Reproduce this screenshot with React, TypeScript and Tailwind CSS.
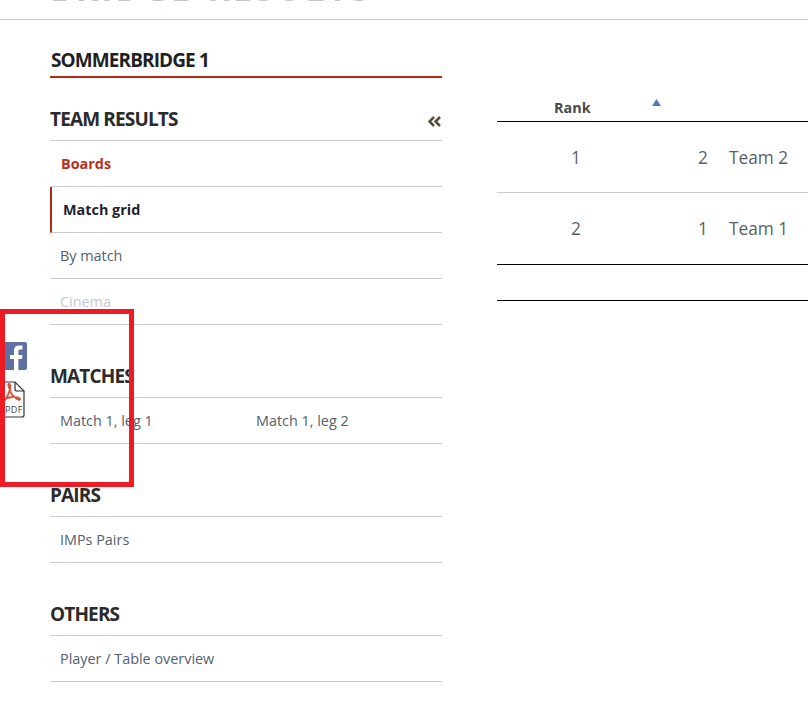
import React from 'react';

const FONT = "font-['Open_Sans',sans-serif]";

const SectionTitle: React.FC<{ title: string; collapse?: boolean }> = ({ title, collapse }) => (
  <div className="h-[35px] border-b border-[#cccccc] flex items-start justify-between">
    <h3 className="text-[19px] leading-[26px] font-bold tracking-[-0.85px] text-[#2b2b2b]">{title}</h3>
    {collapse && (
      <svg className="mt-[10px] mr-px" width="13" height="11" viewBox="0 0 13 11" fill="none" stroke="#5e4a36" strokeWidth="2.5">
        <path d="M6 1 L1.5 5.5 L6 10" />
        <path d="M12 1 L7.5 5.5 L12 10" />
      </svg>
    )}
  </div>
);

const MenuRow: React.FC<{ children: React.ReactNode; className?: string }> = ({
  children,
  className = 'pl-[10px] text-[#55606e]',
}) => <div className={`h-[46px] border-b border-[#cccccc] flex items-center text-[14.4px] ${className}`}>{children}</div>;

const FacebookIcon = () => (
  <svg width="27" height="28" viewBox="0 0 27 28" className="block">
    <rect x="-6" width="33" height="28" rx="2" fill="#5d6fa3" />
    <path d="M14 28 V17 H10 V13 H14 V9 C14 5 16 3.5 19 3.5 H22.5 V7.5 H20 C18.6 7.5 18.4 8.2 18.4 9.2 V13 H22.5 L22 17 H18.4 V28 Z" fill="#fff" />
  </svg>
);

const PdfIcon = () => (
  <svg width="25" height="37" viewBox="0 0 25 37" className="block">
    <path d="M-4 1 H15 L24 10 V34 Q24 36 22 36 H-4 Z" fill="#fff" stroke="#333" strokeWidth="1.2" />
    <path d="M15 1 V8 Q15 10 17 10 H24" fill="none" stroke="#333" strokeWidth="1.2" />
    <path
      d="M9 3 C12 3 10 10 7 16 C5 20 1 23 0 22 C-1 20 6 17 12 16 C16 15.5 21 17 20 18.5 C19 20 13 16 11 12 C10 9 7 3 9 3 Z"
      fill="none"
      stroke="#d0583f"
      strokeWidth="1.8"
    />
  </svg>
);

export default function App() {
  return (
    <div className={`relative w-[808px] h-[707px] overflow-hidden bg-white ${FONT}`}>
      {/* Cropped page heading */}
      <div className="h-5 border-b border-[#cccccc] overflow-hidden">
        <div className="pl-[50px] -mt-[26px] text-[34px] leading-[28px] tracking-[3px] font-bold text-[#c4c4c4] whitespace-nowrap">BRIDGE-RESULTS</div>
      </div>

      <div className="flex pl-[50px] pt-[25px]">
        {/* Left menu */}
        <div className="w-[392px] shrink-0">
          <div className="h-[33px] border-b-2 border-[#b52a13] text-[19px] leading-[30px] font-bold tracking-[-0.9px] text-[#1f1f1f] pl-px">
            SOMMERBRIDGE 1
          </div>

          <div className="mt-[28px]">
            <SectionTitle title="TEAM RESULTS" collapse />
            <MenuRow className="pl-[11px] font-bold text-[#b8301c]">Boards</MenuRow>
            <MenuRow className="pl-[11px] font-bold text-[#1f2430] border-l-2 border-l-[#b52a13]">Match grid</MenuRow>
            <MenuRow>By match</MenuRow>
            <MenuRow className="pl-[10px] text-[#bfcbd6]">Cinema</MenuRow>
          </div>

          <div className="mt-[38px]">
            <SectionTitle title="MATCHES" />
            <div className="h-[46px] border-b border-[#cccccc] grid grid-cols-[196px_1fr] items-center pl-[10px] text-[14.4px] text-[#55606e]">
              <span>Match 1, leg 1</span>
              <span>Match 1, leg 2</span>
            </div>
          </div>

          <div className="mt-[38px]">
            <SectionTitle title="PAIRS" />
            <MenuRow>IMPs Pairs</MenuRow>
          </div>

          <div className="mt-[38px]">
            <SectionTitle title="OTHERS" />
            <MenuRow>Player / Table overview</MenuRow>
          </div>
        </div>

        {/* Ranking table */}
        <div className="ml-[55px] flex-1 mt-[41px]">
          <div className="h-[36px] border-b border-black relative text-[14.4px] font-bold text-[#4a4a4a]">
            <span className="absolute left-[57px] top-[11px]">Rank</span>
            <svg className="absolute left-[155px] top-[13px]" width="9" height="7" viewBox="0 0 9 7">
              <path d="M4.5 0 L9 7 H0 Z" fill="#4a7cc4" />
            </svg>
          </div>
          <div className="h-[71px] pt-px flex items-center text-[17.3px] text-[#5a5f66] border-b border-[#cccccc]">
            <span className="w-[158px] pl-[74px]">1</span>
            <span className="w-[53px] text-right">2</span>
            <span className="ml-[21px] whitespace-nowrap">Team 2</span>
          </div>
          <div className="h-[72px] flex items-center text-[17.3px] text-[#5a5f66] border-b border-black">
            <span className="w-[158px] pl-[74px]">2</span>
            <span className="w-[53px] text-right">1</span>
            <span className="ml-[21px] whitespace-nowrap">Team 1</span>
          </div>
          <div className="h-[36px] border-b border-black" />
        </div>
      </div>

      {/* Share icons under the red annotation box */}
      <div className="absolute left-0 top-[342px] flex flex-col gap-[11px]">
        <FacebookIcon />
        <PdfIcon />
      </div>
      <div className="absolute left-0 top-[309px] w-[134px] h-[178px] border-[5px] border-[#ed1c24] pointer-events-none" />
      <span className="absolute left-[5px] top-[405px] text-[9px] tracking-[0.4px] font-medium leading-none text-[#444]">PDF</span>
    </div>
  );
}
